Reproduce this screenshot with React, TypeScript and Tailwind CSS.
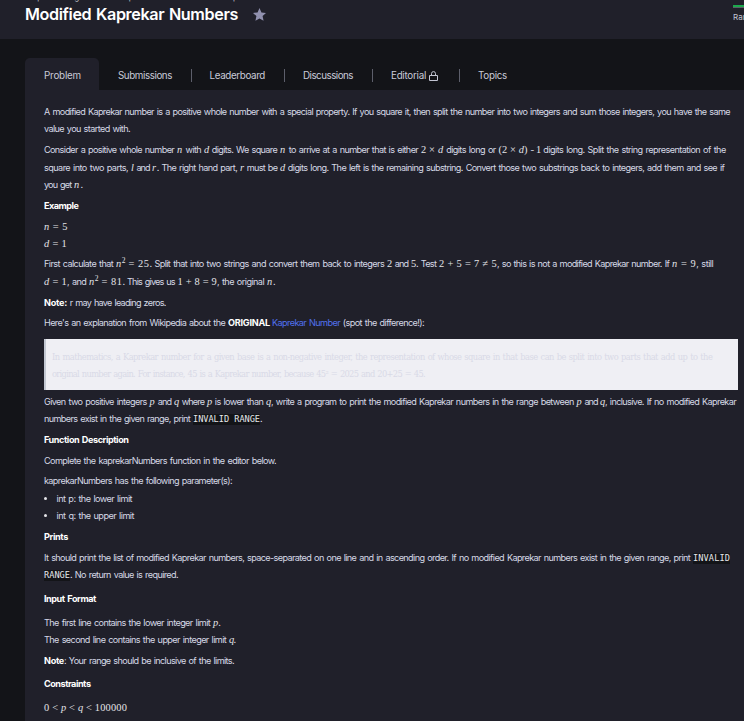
import { useLayoutEffect, useRef } from "react";
import type { ReactNode } from "react";

const kinds = {
  text: "text-[9.1px] leading-[17px] [word-spacing:0.9px] text-[#d6d9e6]",
  bold: "text-[9.1px] leading-[17px] [word-spacing:0.9px] font-bold text-white",
  link: "text-[9.1px] leading-[17px] [word-spacing:0.9px] text-[#5170ee]",
  math: "font-['Liberation_Serif',serif] text-[10.4px] leading-none text-[#e4e4e8]",
  sup: "font-['Liberation_Serif',serif] text-[7.5px] leading-none text-[#e4e4e8] relative -top-[4px]",
  code: "font-['DejaVu_Sans_Mono',monospace] text-[8.6px] leading-[11px] bg-[#131418] text-[#e6e7ec]",
  quote: "font-['DejaVu_Serif',serif] text-[8.3px] leading-[17px] [word-spacing:0.8px] text-[#d9dae7]",
  tab: "text-[9.8px] leading-[17px] text-[#c9cbd8]",
  title: "text-[16.2px] leading-[20px] [word-spacing:1px] font-semibold text-white",
  small: "text-[8px] leading-[12px] text-[#c3c5d2]",
};
type Kind = keyof typeof kinds;
type Part = [text: string, end: number, kind?: Kind];

/* A run of text whose tracking is adjusted to fill its measure. */
function Run({ text, width, kind = "text" }: { text: string; width: number; kind?: Kind }) {
  const ref = useRef<HTMLSpanElement>(null);
  useLayoutEffect(() => {
    const el = ref.current;
    if (!el) return;
    el.style.letterSpacing = "0px";
    el.style.width = "max-content";
    const natural = el.getBoundingClientRect().width;
    el.style.width = `${width}px`;
    el.style.letterSpacing = `${(width - natural) / text.length}px`;
  }, [text, width]);
  const content: ReactNode =
    kind === "math"
      ? text.split(/([a-z])/).map((s, i) => (i % 2 ? <i key={i}>{s}</i> : s))
      : text;
  return (
    <span ref={ref} className={`block shrink-0 whitespace-pre ${kinds[kind]}`}>{content}</span>
  );
}

/* The empty leading box puts every line's baseline 12px below its top. */
function Line({ parts, h = "h-[17px]", start = 44 }: { parts: Part[]; h?: string; start?: number }) {
  return (
    <div className={`flex items-baseline before:h-[12px] before:w-0 before:content-[''] ${h}`}>
      {parts.map(([text, end, kind], i) => (
        <Run key={i} text={text} kind={kind} width={end - (i ? parts[i - 1][1] : start)} />
      ))}
    </div>
  );
}

function Separator() {
  return <span className="h-[13px] w-px shrink-0 bg-[#5d5f6b]" />;
}

export default function App() {
  return (
    <div className="h-[721px] w-[744px] overflow-hidden bg-[#131418] font-['Inter',sans-serif]">
      <header className="flex h-[39px] justify-between overflow-hidden bg-[#20202a] pl-[25px]">
        <div>
          <div className="-mt-[9px] h-[12px]">
            <Run text="Prepare  >  Algorithms  >  Implementation  >  Modified Kaprekar Numbers" width={267} kind="small" />
          </div>
          <div className="mt-[1px] flex h-[20px] items-center">
            <Run text="Modified Kaprekar Numbers" width={213} kind="title" />
            <svg className="ml-[15px] size-[13px]" viewBox="0 0 24 24" fill="#9090ae">
              <path d="M12 0l3.6 8.1 8.4.9-6.3 5.8 1.8 8.7L12 19.2l-7.5 4.3 1.8-8.7L0 9l8.4-.9z" />
            </svg>
          </div>
        </div>
        <div className="w-[11px] overflow-hidden pt-[5px]">
          <div className="h-[3px] border-b border-[#5b6068] bg-[#1ba94c]" />
          <div className="mt-[3px]"><Run text="Rank" width={19} kind="small" /></div>
        </div>
      </header>

      <nav className="mt-[19px] flex h-[32px] items-center pl-[25px]">
        <div className="flex h-[32px] w-[74px] items-center rounded-t-[5px] bg-[#20202a] pt-[3px] pl-[19px]">
          <Run text="Problem" width={37} kind="tab" />
        </div>
        <div className="flex items-center pt-[3px] pl-[19px]">
          <Run text="Submissions" width={54} kind="tab" />
          <span className="w-[19px]" />
          <Separator />
          <span className="w-[17.5px]" />
          <Run text="Leaderboard" width={55.5} kind="tab" />
          <span className="w-[19px]" />
          <Separator />
          <span className="w-[18px]" />
          <Run text="Discussions" width={50} kind="tab" />
          <span className="w-[19px]" />
          <Separator />
          <span className="w-[18px]" />
          <Run text="Editorial" width={35} kind="tab" />
          <svg className="ml-[3px] h-[10px] w-[9px]" viewBox="0 0 9 10" fill="none" stroke="#c3c5d2">
            <path d="M.5 4.5h8v5h-8zM2.5 4.5V2.6a2 2 0 0 1 4 0v1.9" />
          </svg>
          <span className="w-[21px]" />
          <Separator />
          <span className="w-[18px]" />
          <Run text="Topics" width={29} kind="tab" />
        </div>
      </nav>

      <main className="ml-[25px] h-[631px] bg-[#20202a] pt-[13px] pl-[19px]">
        <Line parts={[["A modified Kaprekar number is a positive whole number with a special property. If you square it, then split the number into two integers and sum those integers, you have the same", 730]]} />
        <Line h="h-[21px]" parts={[["value you started with.", 130]]} />
        <Line h="h-[18px]" parts={[
          ["Consider a positive whole number ", 177], ["n", 182.7, "math"], [" with ", 204], ["d", 209, "math"],
          [" digits. We square ", 280], ["n", 286, "math"], [" to arrive at a number that is either ", 421],
          ["2 × d", 443.3, "math"], [" digits long or ", 498.5], ["(2 × d)", 527.7, "math"], [" - ", 536], ["1", 540.5, "math"],
          [" digits long. Split the string representation of the", 725.7],
        ]} />
        <Line parts={[
          ["square into two parts, ", 131], ["l", 134, "math"], [" and ", 152], ["r", 156.7, "math"],
          [". The right hand part, ", 240], ["r", 244, "math"], [" must be ", 280], ["d", 285, "math"],
          [" digits long. The left is the remaining substring. Convert those two substrings back to integers, add them and see if", 724.3],
        ]} />
        <Line h="h-[21px]" parts={[["you get ", 74], ["n", 80.5, "math"], [".", 83]]} />
        <Line h="h-[21px]" parts={[["Example", 78.5, "bold"]]} />
        <Line parts={[["n = 5", 68, "math"]]} />
        <Line h="h-[20px]" parts={[["d = 1", 67, "math"]]} />
        <Line h="h-[18px]" parts={[
          ["First calculate that ", 116], ["n", 121.8, "math"], ["2", 125.5, "sup"], [" = 25", 149.5, "math"],
          [". Split that into two strings and convert them back to integers ", 387], ["2", 392, "math"], [" and ", 411],
          ["5", 416, "math"], [". Test ", 439], ["2 + 5 = 7 ≠ 5", 497, "math"],
          [", so this is not a modified Kaprekar number. If ", 672], ["n = 9", 696.3, "math"], [", still", 713.3],
        ]} />
        <Line h="h-[21px]" parts={[
          ["d = 1", 67, "math"], [", and ", 89], ["n", 94.8, "math"], ["2", 98.5, "sup"], [" = 81", 122.5, "math"],
          [". This gives us ", 177.5], ["1 + 8 = 9", 217, "math"], [", the original ", 267], ["n", 273, "math"], [".", 275.5],
        ]} />
        <Line h="h-[20px]" parts={[["Note:", 67, "bold"], [" r may have leading zeros.", 165.7]]} />
        <Line parts={[
          ["Here's an explanation from Wikipedia about the ", 228], ["ORIGINAL", 270, "bold"], [" ", 272],
          ["Kaprekar Number", 340, "link"], [" (spot the difference!):", 424],
        ]} />
        <blockquote className="mt-[8px] h-[51px] w-[694px] border-l-2 border-[#c3c8d2] bg-[#efeff4] pt-[9px] pl-[6px]">
          <Line start={52} parts={[["In mathematics, a Kaprekar number for a given base is a non-negative integer, the representation of whose square in that base can be split into two parts that add up to the", 712.3, "quote"]]} />
          <Line start={52} parts={[["original number again. For instance, 45 is a Kaprekar number, because 45² = 2025 and 20+25 = 45.", 425, "quote"]]} />
        </blockquote>
        <div className="pt-[3px]">
          <Line parts={[
            ["Given two positive integers ", 149.5], ["p", 155, "math"], [" and ", 174], ["q", 179, "math"], [" where ", 207],
            ["p", 212, "math"], [" is lower than ", 266], ["q", 271, "math"],
            [", write a program to print the modified Kaprekar numbers in the range between ", 576.5], ["p", 582, "math"],
            [" and ", 600], ["q", 605, "math"], [", inclusive. If no modified Kaprekar", 736],
          ]} />
          <Line h="h-[21px]" parts={[["numbers exist in the given range, print ", 193], ["INVALID RANGE", 260, "code"], [".", 262.5]]} />
          <Line h="h-[21px]" parts={[["Function Description", 128.5, "bold"]]} />
          <Line h="h-[20px]" parts={[["Complete the kaprekarNumbers function in the editor below.", 276]]} />
          <Line h="h-[18px]" parts={[["kaprekarNumbers has the following parameter(s):", 232]]} />
          <div className="flex items-start">
            <span className="mt-[7px] mr-[9.5px] size-[3px] rounded-full bg-[#e4e4e8]" />
            <Line start={56.5} parts={[["int p: the lower limit", 132]]} />
          </div>
          <div className="flex h-[21px] items-start">
            <span className="mt-[7px] mr-[9.5px] size-[3px] rounded-full bg-[#e4e4e8]" />
            <Line start={56.5} parts={[["int q: the upper limit", 134]]} />
          </div>
          <Line h="h-[21px]" parts={[["Prints", 68, "bold"]]} />
          <Line parts={[["It should print the list of modified Kaprekar numbers, space-separated on one line and in ascending order. If no modified Kaprekar numbers exist in the given range, print ", 693], ["INVALID", 730, "code"]]} />
          <Line h="h-[24px]" parts={[["RANGE", 70, "code"], [". No return value is required.", 178]]} />
          <Line h="h-[24px]" parts={[["Input Format", 96, "bold"]]} />
          <Line parts={[["The first line contains the lower integer limit ", 213], ["p", 218.3, "math"], [".", 220.5]]} />
          <Line h="h-[21px]" parts={[["The second line contains the upper integer limit ", 229], ["q", 233.5, "math"], [".", 236]]} />
          <Line h="h-[23px]" parts={[["Note", 64, "bold"], [": Your range should be inclusive of the limits.", 234]]} />
          <Line h="h-[24px]" parts={[["Constraints", 90.5, "bold"]]} />
          <Line parts={[["0 < p < q < 100000", 127, "math"]]} />
        </div>
      </main>
    </div>
  );
}
